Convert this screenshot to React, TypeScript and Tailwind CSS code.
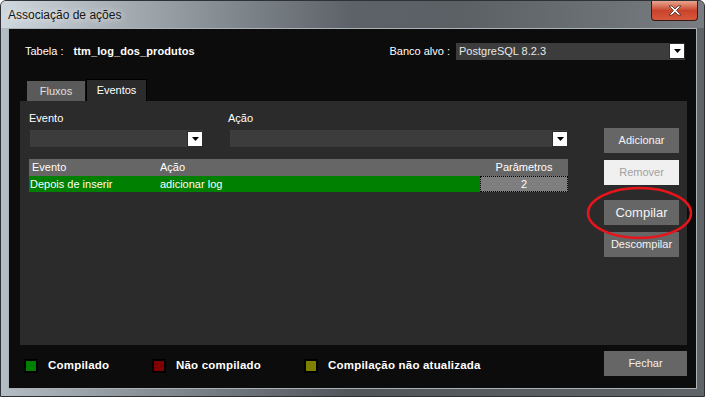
import React from "react";

/* -------------------- Small pieces -------------------- */

const font = "font-['Liberation_Sans',Arial,sans-serif]";

const DropArrow: React.FC = () => (
  <div className="w-[16px] h-[16px] bg-white flex items-center justify-center border border-[#2b2b2b]">
    <svg width="7" height="4" viewBox="0 0 7 4">
      <path d="M0 0h7L3.5 4z" fill="#000" />
    </svg>
  </div>
);

type ComboProps = { value?: string; width: string };

const Combo: React.FC<ComboProps> = ({ value, width }) => (
  <div className={`${width} h-[17px] bg-[#3c3c3c] flex items-center justify-between`}>
    <span className="pl-[3px] text-[11px] leading-none text-[#e8e8e8]">
      {value}
    </span>
    <DropArrow />
  </div>
);

type BtnProps = { label: string; disabled?: boolean; big?: boolean };

const Btn: React.FC<BtnProps> = ({ label, disabled, big }) => (
  <div
    className={`w-[75px] h-[25px] flex items-center justify-center ${
      disabled ? "bg-[#f0f0f0] text-[#a0a0a0]" : "bg-[#666666] text-[#f4f4f4]"
    } ${big ? "text-[13px]" : "text-[11px]"} leading-none`}
  >
    {label}
  </div>
);

const LegendItem: React.FC<{ color: string; label: string; width: string }> = ({
  color,
  label,
  width,
}) => (
  <div className={`${width} flex items-center`}>
    <div className={`w-[14px] h-[14px] border-2 border-black ${color}`} />
    <span className="ml-[10px] text-[11.5px] tracking-[0.2px] font-bold text-white leading-none">
      {label}
    </span>
  </div>
);

/* -------------------- Main -------------------- */

const App: React.FC = () => {
  return (
    <div
      className={`${font} relative w-[705px] h-[397px] overflow-hidden rounded-t-[6px] border border-[#2e3236] bg-gradient-to-r from-[#b3bdc3] via-[#50555a] to-[#5f6468] flex flex-col`}
    >
      {/* Title bar */}
      <div className="h-[27px] flex items-center bg-gradient-to-r from-[#cfd8de] via-[#5c6267] via-50% to-[#575c60] relative">
        <div className="absolute inset-0 bg-gradient-to-r from-transparent via-transparent via-65% to-[#9a9ea2]/50" />
        <span className="relative ml-[7px] text-[12px] text-[#141414] leading-none [text-shadow:0_0_6px_#ffffff]">
          Associação de ações
        </span>
        {/* close button */}
        <div className="absolute right-[6px] top-0 w-[47px] h-[20px] rounded-b-[4px] border border-t-0 border-[#3b1a14] bg-gradient-to-b from-[#e7a58f] via-[#c8432b] to-[#d7573c] flex items-center justify-center">
          <svg width="14" height="11" viewBox="0 0 14 11">
            <path
              d="M1 1h3l3 3 3-3h3l-4.5 4.5L13 10h-3L7 7l-3 3H1l4.5-4.5z"
              fill="#ffffff"
              stroke="#4a2a24"
              strokeWidth="0.8"
            />
          </svg>
        </div>
      </div>

      {/* Client area */}
      <div className="mx-[7px] w-[689px] h-[361px] bg-[#0c0c0c] border border-[#aab2b8] flex flex-col">
        {/* Header */}
        <div className="mt-[13px] h-[18px] flex items-center justify-between pl-[16px] pr-[11px]">
          <div className="flex items-center text-[11px] text-white leading-none">
            <span>Tabela :</span>
            <span className="ml-[10px] font-bold tracking-[0.1px]">ttm_log_dos_produtos</span>
          </div>
          <div className="flex items-center">
            <span className="text-[11px] text-white leading-none mr-[6px]">
              Banco alvo :
            </span>
            <Combo value="PostgreSQL 8.2.3" width="w-[229px]" />
          </div>
        </div>

        {/* Tabs */}
        <div className="mt-[19px] h-[22px] flex items-end pl-[18px]">
          <div className="w-[58px] h-[20px] bg-[#5a5a5a] flex items-center justify-center text-[11px] text-[#e0e0e0] leading-none">
            Fluxos
          </div>
          <div className="ml-[1px] w-[61px] h-[22px] bg-[#2b2b2b] border border-b-0 border-black flex items-center justify-center text-[11px] text-white leading-none">
            Eventos
          </div>
        </div>

        {/* Panel */}
        <div className="ml-[11px] w-[667px] h-[244px] bg-[#2b2b2b] flex text-[11px] text-white">
          <div className="w-[568px] pl-[9px] pt-[10px] flex flex-col">
            <div className="flex">
              <div className="flex flex-col w-[174px]">
                <div className="h-[14px] leading-[14px]">Evento</div>
                <div className="mt-[5px] ml-[1px]">
                  <Combo width="w-[173px]" />
                </div>
              </div>
              <div className="flex flex-col ml-[25px]">
                <div className="h-[14px] leading-[14px]">Ação</div>
                <div className="mt-[5px] ml-[2px]">
                  <Combo width="w-[338px]" />
                </div>
              </div>
            </div>

            {/* Grid */}
            <div className="mt-[12px] w-[539px] flex flex-col">
              <div className="h-[17px] bg-[#666666] flex items-center leading-none">
                <div className="w-[128px] pl-[3px]">Evento</div>
                <div className="w-[323px] pl-[3px]">Ação</div>
                <div className="w-[88px] text-center">Parâmetros</div>
              </div>
              <div className="h-[16px] bg-[#008000] flex items-center leading-none">
                <div className="w-[128px] pl-[1px]">Depois de inserir</div>
                <div className="w-[323px] pl-[3px]">adicionar log</div>
                <div className="w-[88px] h-[16px] bg-[#7e7e7e] border border-dotted border-black flex items-center justify-center">
                  2
                </div>
              </div>
            </div>
          </div>

          {/* Buttons */}
          <div className="ml-[16px] pt-[27px] flex flex-col">
            <Btn label="Adicionar" />
            <div className="mt-[7px]">
              <Btn label="Remover" disabled />
            </div>
            <div className="mt-[15px]">
              <Btn label="Compilar" big />
            </div>
            <div className="mt-[7px]">
              <Btn label="Descompilar" />
            </div>
          </div>
        </div>

        {/* Bottom row */}
        <div className="mt-[6px] h-[25px] flex items-center pl-[15px] pr-[9px]">
          <div className="flex items-center pt-[5px]">
            <LegendItem color="bg-[#008000]" label="Compilado" width="w-[128px]" />
            <LegendItem color="bg-[#800000]" label="Não compilado" width="w-[152px]" />
            <LegendItem
              color="bg-[#808000]"
              label="Compilação não atualizada"
              width="w-[200px]"
            />
          </div>
          <div className="ml-auto w-[83px] h-[25px] bg-[#666666] flex items-center justify-center text-[11px] text-[#f0f0f0] leading-none">
            Fechar
          </div>
        </div>
      </div>

      {/* Red highlight ellipse */}
      <svg
        className="absolute left-[585px] top-[185px] pointer-events-none"
        width="107"
        height="54"
        viewBox="0 0 107 54"
      >
        <ellipse
          cx="53.5"
          cy="27"
          rx="51.5"
          ry="25"
          fill="none"
          stroke="#e8141c"
          strokeWidth="2.5"
        />
      </svg>
    </div>
  );
};

export default App;
